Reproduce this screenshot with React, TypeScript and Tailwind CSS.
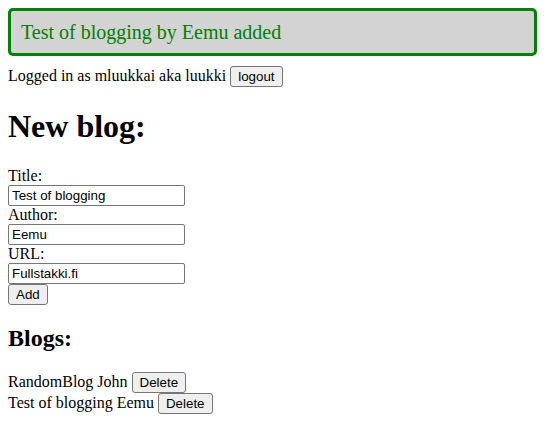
import React from 'react'

const btn =
  "inline-block font-['Liberation_Sans',Arial,sans-serif] text-[13.33px] leading-[15px] text-black bg-[#efefef] border border-solid border-[#767676] rounded-[3px] px-[7px] py-[2px]"

const input =
  "block w-[177px] h-[21px] font-['Liberation_Sans',Arial,sans-serif] text-[13.33px] text-black bg-white border border-solid border-[#767676] rounded-[2px] px-[3px] py-[1px]"

const blogs = [
  { title: 'RandomBlog', author: 'John' },
  { title: 'Test of blogging', author: 'Eemu' },
]

export default function App() {
  return (
    <div className="p-2 font-['Liberation_Serif','Times_New_Roman',serif] text-base leading-[normal] text-black bg-white min-h-screen">
      <div className="text-[20px] leading-[22px] text-[#008000] bg-[#d3d3d3] border-[3px] border-solid border-[#008000] rounded-[5px] p-[10px] mb-[10px]">
        Test of blogging by Eemu added
      </div>

      <div>
        Logged in as mluukkai aka luukki <button className={btn}>logout</button>
      </div>

      <h1 className="text-[32px] font-bold my-[21.44px]">New blog:</h1>

      <form onSubmit={e => e.preventDefault()}>
        <div>
          <div>Title:</div>
          <input className={input} defaultValue="Test of blogging" />
        </div>
        <div>
          <div>Author:</div>
          <input className={input} defaultValue="Eemu" />
        </div>
        <div>
          <div>URL:</div>
          <input className={input} defaultValue="Fullstakki.fi" />
        </div>
        <button type="submit" className={btn}>Add</button>
      </form>

      <h2 className="text-[24px] font-bold my-[19.92px]">Blogs:</h2>

      {blogs.map(b => (
        <div key={b.title}>
          {b.title} {b.author} <button className={btn}>Delete</button>
        </div>
      ))}
    </div>
  )
}
